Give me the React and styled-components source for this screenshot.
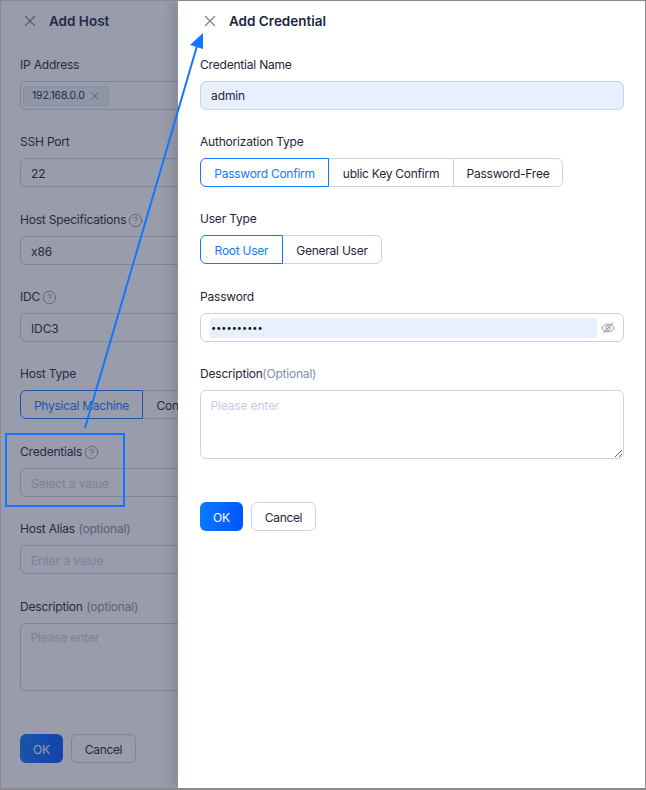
import React from "react";
import styled, { createGlobalStyle } from "styled-components";
import { X, CircleHelp } from "lucide-react";

const Global = createGlobalStyle`
  html, body { margin: 0; padding: 0; background: #fff; }
  * { box-sizing: border-box; }
  body { font-family: Inter, "Noto Sans", "Liberation Sans", sans-serif; color: #1b2138; }
`;

const Frame = styled.div`
  position: relative;
  width: 646px;
  height: 790px;
  overflow: hidden;
  background: #fff;
`;
const Outline = styled.div`
  position: absolute;
  inset: 0;
  border: 1px solid #8b8b8b;
  border-bottom-width: 2px;
  pointer-events: none;
  z-index: 5;
`;
const Panel = styled.section`
  display: flex;
  flex-direction: column;
  padding: 0 21px 0 20px;
  height: 100%;
  isolation: isolate;
`;
const Mask = styled.div`
  position: absolute;
  inset: 0;
  background: rgba(40, 48, 80, 0.48);
`;
const Drawer = styled.div`
  position: absolute;
  top: 1px;
  bottom: 2px;
  left: 178px;
  right: 1px;
  background: #fff;
  box-shadow: -6px 0 10px rgba(30, 36, 60, 0.14);
`;
const DrawerPanel = styled(Panel)`
  padding: 0 21px 0 22px;
  margin-top: -1px;
`;
const Header = styled.header`
  display: flex;
  align-items: center;
  height: 42px;
  margin-bottom: 13px;
  margin-left: 1px;
  gap: 10px;
  font-size: 13.5px;
  font-weight: 600;
  line-height: 42px;
  color: #20263d;
  svg { color: #7d8396; }
`;
const Field = styled.div`
  display: flex;
  flex-direction: column;
  margin-bottom: ${(p) => p.$mb ?? 22}px;
`;
const Label = styled.label`
  display: flex;
  align-items: center;
  gap: 2px;
  height: 18px;
  padding-top: 2px;
  margin-bottom: 8px;
  font-size: 12px;
  letter-spacing: -0.2px;
  line-height: 16px;
  color: #1f2539;
  svg { color: #6f7485; }
`;
const Hint = styled.span`
  color: #8390a8;
  margin-left: 1.5px;
`;
const TightHint = styled(Hint)`
  margin-left: -2.5px;
`;
const Box = styled.div`
  display: flex;
  align-items: center;
  height: 29px;
  width: 100%;
  padding: ${(p) => (p.$filled ? 0 : 1)}px 10px 0;
  border: 1px solid #cdd3e1;
  border-radius: 6px;
  font-size: 12px;
  letter-spacing: -0.1px;
  color: #1f2539;
  background: ${(p) => (p.$filled ? "#e8f0fd" : "#fff")};
`;
const TagBox = styled(Box)`
  padding: 0 2px;
`;
const Tag = styled.span`
  display: inline-flex;
  align-items: center;
  gap: 3px;
  height: 20px;
  padding: 0 6px 0 8px;
  border: 1px solid #dfe3ec;
  border-radius: 4px;
  background: #f2f4f8;
  font-size: 10.5px;
  letter-spacing: -0.2px;
  svg { color: #7d8396; }
`;
const Placeholder = styled.span`
  color: #c6cce0;
`;
const Segments = styled.div`
  display: flex;
  height: 29px;
`;
const Segment = styled.div`
  display: flex;
  align-items: center;
  justify-content: center;
  flex: none;
  width: ${(p) => p.$w}px;
  margin-left: ${(p) => (p.$first ? 0 : -1)}px;
  padding-top: 1px;
  font-size: 12px;
  letter-spacing: -0.25px;
  white-space: nowrap;
  background: #fff;
  position: relative;
  z-index: ${(p) => (p.$active ? 1 : 0)};
  color: ${(p) => (p.$active ? "#1677ff" : "#1f2539")};
  border: 1px solid ${(p) => (p.$active ? "#1677ff" : "#cdd3e1")};
  border-radius: ${(p) => (p.$first ? "6px 0 0 6px" : p.$last ? "0 6px 6px 0" : "0")};
`;
const PasswordBox = styled(Box)`
  padding: 0 8px 0 9px;
  gap: 4px;
  svg { color: #8c93a5; flex: none; }
`;
const PasswordInput = styled.input`
  flex: 1;
  min-width: 0;
  height: 20px;
  border: 0;
  outline: 0;
  padding: 0 1px;
  font: 9.2px Inter, sans-serif;
  color: #111;
  background: #e8f0fd;
`;
const TextArea = styled.textarea`
  display: block;
  width: 100%;
  height: ${(p) => p.$h}px;
  padding: ${(p) => p.$pt}px 9.5px 0;
  border: 1px solid #cdd3e1;
  border-radius: 6px;
  font: 12px/18px Inter, sans-serif;
  letter-spacing: -0.15px;
  background: #fff;
  outline: 0;
  &::placeholder { color: #c6cce0; opacity: 1; }
`;
const Actions = styled.div`
  display: flex;
  gap: 8px;
  margin-top: ${(p) => p.$mt}px;
`;
const Primary = styled.button`
  width: 43px;
  height: 29px;
  border: 0;
  border-radius: 6px;
  background: linear-gradient(100deg, #0a7cff, #0052ff);
  color: #fff;
  font: 12px Inter, sans-serif;
  padding: 1px 0 0;
`;
const Secondary = styled.button`
  width: 65px;
  height: 29px;
  border: 1px solid #cdd3e1;
  border-radius: 6px;
  background: #fff;
  color: #1f2539;
  font: 12px Inter, sans-serif;
  letter-spacing: -0.35px;
  padding: 1px 0 0;
`;
const Callout = styled.div`
  position: absolute;
  left: 5px;
  top: 433px;
  width: 120px;
  height: 74px;
  border: 2px solid #1476ff;
  z-index: 3;
`;
const Arrow = styled.svg`
  position: absolute;
  inset: 0;
  z-index: 3;
  pointer-events: none;
`;

const Help = () => <CircleHelp size={15} strokeWidth={1.15} />;

const EyeSlash = () => (
  <svg width="14" height="14" viewBox="0 0 14 14" fill="none" stroke="currentColor" strokeWidth="1">
    <path d="M0.8 7C2.4 4.4 4.5 3.2 7 3.2S11.6 4.4 13.2 7C11.6 9.6 9.5 10.8 7 10.8S2.4 9.6 0.8 7Z" />
    <circle cx="7" cy="7" r="2.2" />
    <path d="M2.4 12.2L11.8 1.8" />
  </svg>
);

export default function App() {
  return (
    <Frame>
      <Global />
      <Panel>
        <Header>
          <X size={18} strokeWidth={1.7} />
          Add Host
        </Header>
        <Field>
          <Label>IP Address</Label>
          <TagBox>
            <Tag>
              192.168.0.0 <X size={14} strokeWidth={1.3} />
            </Tag>
          </TagBox>
        </Field>
        <Field $mb={23}>
          <Label>SSH Port</Label>
          <Box>22</Box>
        </Field>
        <Field>
          <Label>Host Specifications <Help /></Label>
          <Box>x86</Box>
        </Field>
        <Field>
          <Label>IDC <Help /></Label>
          <Box>IDC3</Box>
        </Field>
        <Field $mb={23}>
          <Label>Host Type</Label>
          <Segments>
            <Segment $first $active $w={123}>
              Physical Machine
            </Segment>
            <Segment $w={82}>Container</Segment>
          </Segments>
        </Field>
        <Field>
          <Label>Credentials <Help /></Label>
          <Box>
            <Placeholder>Select a value</Placeholder>
          </Box>
        </Field>
        <Field $mb={23}>
          <Label>
            Host Alias <Hint>(optional)</Hint>
          </Label>
          <Box>
            <Placeholder>Enter a value</Placeholder>
          </Box>
        </Field>
        <Field $mb={0}>
          <Label>
            Description <Hint>(optional)</Hint>
          </Label>
          <TextArea $h={68} $pt={5} placeholder="Please enter" readOnly />
        </Field>
        <Actions $mt={43}>
          <Primary>OK</Primary>
          <Secondary>Cancel</Secondary>
        </Actions>
      </Panel>
      <Mask />
      <Drawer>
        <DrawerPanel>
          <Header>
            <X size={18} strokeWidth={1.7} />
            Add Credential
          </Header>
          <Field>
            <Label>Credential Name</Label>
            <Box $filled>admin</Box>
          </Field>
          <Field>
            <Label>Authorization Type</Label>
            <Segments>
              <Segment $first $active $w={129}>
                Password Confirm
              </Segment>
              <Segment $w={126}>ublic Key Confirm</Segment>
              <Segment $last $w={110}>
                Password-Free
              </Segment>
            </Segments>
          </Field>
          <Field $mb={23}>
            <Label>User Type</Label>
            <Segments>
              <Segment $first $active $w={83}>
                Root User
              </Segment>
              <Segment $last $w={100}>
                General User
              </Segment>
            </Segments>
          </Field>
          <Field>
            <Label>Password</Label>
            <PasswordBox>
              <PasswordInput type="password" value="1234567890" readOnly />
              <EyeSlash />
            </PasswordBox>
          </Field>
          <Field $mb={0}>
            <Label>
              Description
              <TightHint>(Optional)</TightHint>
            </Label>
            <TextArea $h={69} $pt={6} placeholder="Please enter" readOnly />
          </Field>
          <Actions $mt={43}>
            <Primary>OK</Primary>
            <Secondary>Cancel</Secondary>
          </Actions>
        </DrawerPanel>
      </Drawer>
      <Callout />
      <Arrow width="646" height="790" viewBox="0 0 646 790">
        <line x1="85" y1="428" x2="197" y2="46" stroke="#1476ff" strokeWidth="2" />
        <polygon points="203,33 190,45 203,49" fill="#1476ff" />
      </Arrow>
      <Outline />
    </Frame>
  );
}
